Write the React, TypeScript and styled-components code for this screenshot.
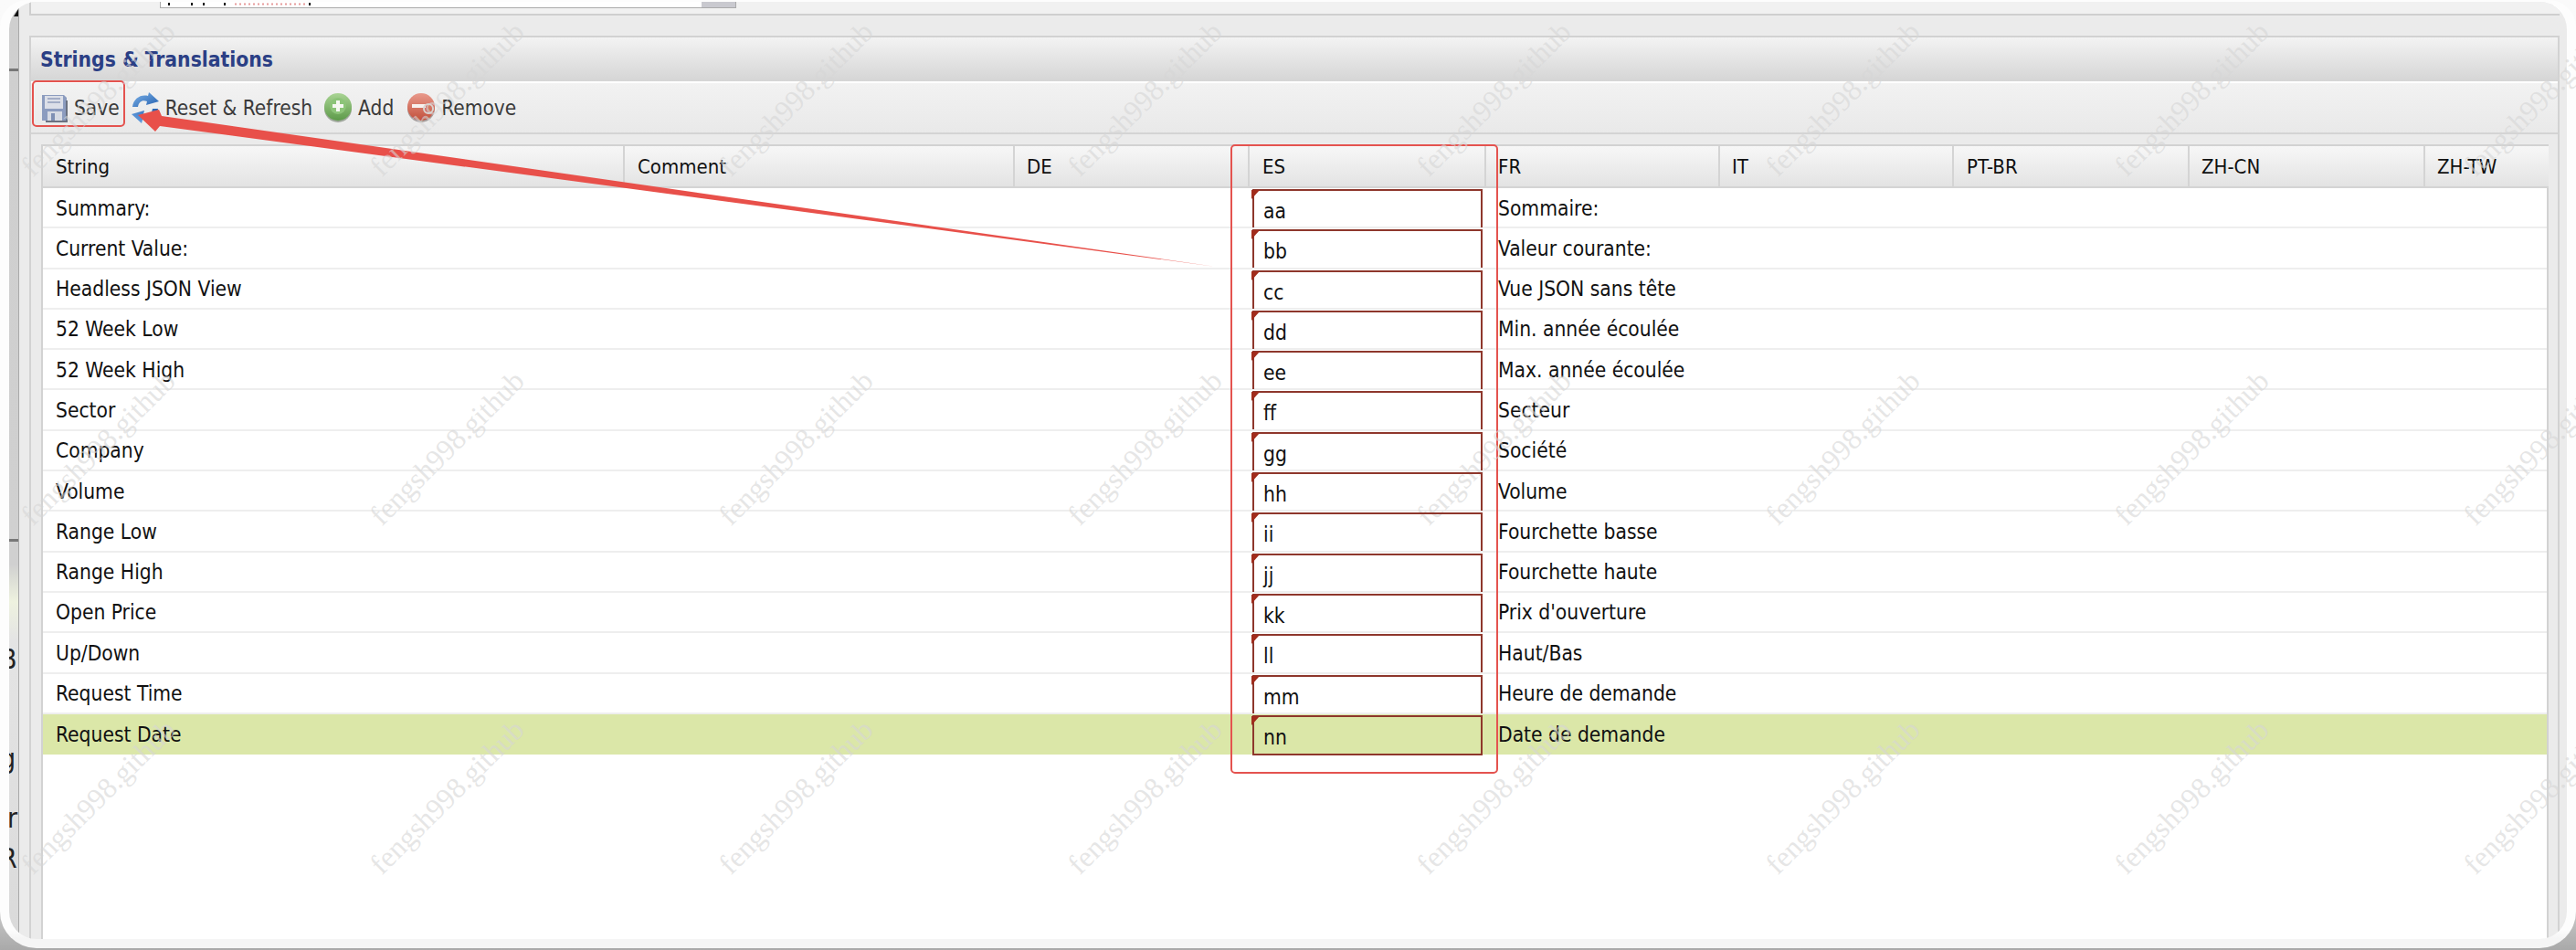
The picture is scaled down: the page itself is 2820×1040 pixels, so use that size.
import styled, { createGlobalStyle } from "styled-components";

const GlobalStyle = createGlobalStyle`
  html, body {
    margin: 0;
    padding: 0;
    background: #fff;
  }
  #root {
    width: 2820px;
    height: 1040px;
    overflow: hidden;
  }
`;

const uiFont = `"DejaVu Sans Condensed", "DejaVu Sans", "Noto Sans", sans-serif`;

const columns = [
  { name: "String", pad: 14 },
  { name: "Comment", pad: 14 },
  { name: "DE", pad: 13 },
  { name: "ES", pad: 14 },
  { name: "FR", pad: 13 },
  { name: "IT", pad: 13 },
  { name: "PT-BR", pad: 14 },
  { name: "ZH-CN", pad: 13 },
  { name: "ZH-TW", pad: 13 },
];

const rows = [
  ["Summary:", "aa", "Sommaire:"],
  ["Current Value:", "bb", "Valeur courante:"],
  ["Headless JSON View", "cc", "Vue JSON sans tête"],
  ["52 Week Low", "dd", "Min. année écoulée"],
  ["52 Week High", "ee", "Max. année écoulée"],
  ["Sector", "ff", "Secteur"],
  ["Company", "gg", "Société"],
  ["Volume", "hh", "Volume"],
  ["Range Low", "ii", "Fourchette basse"],
  ["Range High", "jj", "Fourchette haute"],
  ["Open Price", "kk", "Prix d'ouverture"],
  ["Up/Down", "ll", "Haut/Bas"],
  ["Request Time", "mm", "Heure de demande"],
  ["Request Date", "nn", "Date de demande"],
];

const stripGlyphs = [
  { text: "B", top: 112 },
  { text: "/", top: 35 },
  { text: "g", top: 6 },
  { text: "Ir", top: 31 },
  { text: "R", top: 10 },
];

const gridTemplate = "637px 427px 257px 259px 256px 256px 258px 258px 135px";

const Screen = styled.div`
  position: relative;
  width: 2820px;
  height: 1040px;
  overflow: hidden;
  background: linear-gradient(180deg, #fafafa 0%, #f5f5f5 90%, #a9a9a9 100%);
  font-family: ${uiFont};
`;

const Frame = styled.div`
  box-sizing: border-box;
  width: 2820px;
  height: 1038px;
  padding: 2px 10px 10px;
  background: linear-gradient(180deg, #fdfdfd 0%, #fdfdfd 98%, #f5f5f5 99%);
  border-radius: 30px 30px 40px 40px;
`;

const Viewport = styled.div`
  display: flex;
  height: 100%;
  overflow: hidden;
  border-radius: 30px;
`;

const LeftStrip = styled.div`
  display: flex;
  flex-direction: column;
  box-sizing: border-box;
  flex: 0 0 11px;
  padding-top: 8px;
  overflow: hidden;
  border-right: 1px solid #a9a9a9;
  background: linear-gradient(180deg, #cfcfcf 0%, #d0d0d0 60%, #eef2df 64%, #e4e4e4 68%, #dadada 100%);
  color: #222;
  font-size: 30px;
  line-height: 34px;
`;

const StripMark = styled.div`
  width: 0;
  height: 0;
  margin-left: 5px;
  border-left: 5px solid transparent;
  border-bottom: 8px solid #111;
`;

const StripRule = styled.div<{ $top: number }>`
  flex: none;
  height: 3px;
  margin-top: ${(p) => p.$top}px;
  background: #777;
`;

const StripGlyph = styled.div<{ $top: number }>`
  flex: none;
  margin: ${(p) => p.$top}px 0 0 -10px;
  white-space: nowrap;
`;

const Main = styled.div`
  display: flex;
  flex: 1;
  flex-direction: column;
  min-width: 0;
  padding: 0 8px 0 11px;
  background: #ebebeb;
`;

const TopPanel = styled.div`
  flex: none;
  box-sizing: border-box;
  height: 15px;
  padding-left: 141px;
  border-left: 2px solid #cfcfcf;
  border-bottom: 2px solid #cfcfcf;
  background: #f1f1f1;
`;

const TopField = styled.div`
  display: flex;
  box-sizing: border-box;
  width: 631px;
  height: 7px;
  border: 1px solid #aaa;
  border-top: 0;
  background: #fff;
`;

const TopFieldScroll = styled.div`
  margin-left: auto;
  width: 37px;
  background: #c9c9cf;
`;

const Section = styled.section`
  display: flex;
  flex: 1;
  flex-direction: column;
  min-height: 0;
  margin-top: 22px;
  border: solid #d2d2d2;
  border-width: 2px 2px 0;
`;

const TitleBar = styled.div`
  flex: none;
  display: flex;
  align-items: center;
  box-sizing: border-box;
  height: 50px;
  padding-left: 10px;
  border-bottom: 2px solid #fff;
  background: linear-gradient(180deg, #f3f3f3 0%, #d5d5d5 100%);
`;

const Title = styled.h2`
  margin: 0;
  color: #2b3f85;
  font-size: 22.7px;
  font-weight: 700;
`;

const Toolbar = styled.div`
  flex: none;
  display: flex;
  align-items: center;
  box-sizing: border-box;
  height: 56px;
  padding: 0 0 0 10px;
  border-bottom: 2px solid #d4d4d4;
  background: linear-gradient(180deg, #f2f2f2 0%, #e9e9e9 100%);
`;

const ToolButton = styled.div<{ $gap: number }>`
  display: flex;
  align-items: center;
  gap: 6px;
  margin-right: ${(p) => p.$gap}px;
  color: #3b3b3b;
  font-size: 22.5px;
  white-space: nowrap;
`;

const Body = styled.div`
  display: flex;
  flex: 1;
  min-height: 0;
  padding: 11px 10px 0 11px;
`;

const Table = styled.div`
  flex: 1;
  min-width: 0;
  border: solid #d2d2d2;
  border-width: 2px 2px 0;
  background: #fff;
`;

const HeaderRow = styled.div`
  display: grid;
  grid-template-columns: ${gridTemplate};
  height: 46px;
`;

const HeaderCell = styled.div<{ $pad: number }>`
  display: flex;
  align-items: center;
  box-sizing: border-box;
  padding-left: ${(p) => p.$pad}px;
  border-right: 2px solid #d4d4d4;
  border-bottom: 2px solid #d4d4d4;
  background: linear-gradient(180deg, #f7f7f7 0%, #e3e3e3 100%);
  color: #111;
  font-size: 22px;

  &:last-child {
    border-right: 0;
  }
`;

const Row = styled.div<{ $selected?: boolean }>`
  display: grid;
  grid-template-columns: ${gridTemplate};
  box-sizing: border-box;
  height: 44.3px;
  border-bottom: 2px solid ${(p) => (p.$selected ? "#dbe7a8" : "#eeeeee")};
  background: ${(p) => (p.$selected ? "#dbe7a8" : "#fff")};
`;

const Cell = styled.div<{ $pad?: number }>`
  display: flex;
  align-items: center;
  padding-left: ${(p) => p.$pad ?? 14}px;
  color: #111;
  font-size: 22.6px;
  white-space: nowrap;
`;

const EditCell = styled.div<{ $last?: boolean }>`
  position: relative;
  box-sizing: border-box;
  display: flex;
  align-items: center;
  width: 252px;
  height: ${(p) => (p.$last ? 44 : 42)}px;
  margin: 1px 0 0 3px;
  padding: 4px 0 0 10px;
  border: 2px solid #8e372c;
  border-bottom-width: ${(p) => (p.$last ? 2 : 0)}px;
  color: #111;
  font-size: 22.6px;
  z-index: 1;

  &::before {
    content: "";
    position: absolute;
    top: -1px;
    left: -3px;
    border-top: 10px solid #a12c1c;
    border-right: 9px solid transparent;
  }
`;

const Annotation = styled.div<{ $x: number; $y: number; $w: number; $h: number }>`
  position: absolute;
  left: ${(p) => p.$x}px;
  top: ${(p) => p.$y}px;
  box-sizing: border-box;
  width: ${(p) => p.$w}px;
  height: ${(p) => p.$h}px;
  border: 2px solid #e4534f;
  border-radius: 5px;
`;

const ArrowLayer = styled.svg`
  position: absolute;
  inset: 0;
`;

const WatermarkLayer = styled.div`
  position: absolute;
  left: -83px;
  top: -83px;
  display: grid;
  grid-template-columns: repeat(8, 382px);
  grid-auto-rows: 382px;
  pointer-events: none;
`;

const Watermark = styled.span`
  align-self: center;
  justify-self: center;
  transform: rotate(-45deg);
  color: rgba(214, 214, 214, 0.62);
  font-family: "Liberation Serif", serif;
  font-size: 32px;
  white-space: nowrap;
`;

function SaveIcon() {
  return (
    <svg width="31" height="32" viewBox="0 0 31 32">
      <defs>
        <filter id="saveBlur"><feGaussianBlur stdDeviation="0.7" /></filter>
      </defs>
      <g filter="url(#saveBlur)">
        <path d="M2 2h24l3 3v25H2z" fill="#8c9cbf" />
        <path d="M5 3h20v14H5z" fill="#dcdfe8" />
        <path d="M8 6h14M8 10h14" stroke="#a3adc6" strokeWidth="2" />
        <path d="M8 20h16v10H8z" fill="#d7dbe4" />
        <path d="M12 22h4v8h-4z" fill="#7f90b4" />
        <path d="M29 8v23H6" fill="none" stroke="#6a7180" strokeWidth="2" />
      </g>
    </svg>
  );
}

function RefreshIcon() {
  return (
    <svg width="32" height="34" viewBox="0 0 32 34">
      <defs>
        <linearGradient id="refreshTop" x1="0" y1="0" x2="1" y2="1">
          <stop offset="0" stopColor="#7fb4e8" />
          <stop offset="1" stopColor="#2460b0" />
        </linearGradient>
        <linearGradient id="refreshLow" x1="1" y1="0" x2="0" y2="1">
          <stop offset="0" stopColor="#2460b0" />
          <stop offset="1" stopColor="#6fa9e6" />
        </linearGradient>
        <filter id="refreshBlur"><feGaussianBlur stdDeviation="0.5" /></filter>
      </defs>
      <g filter="url(#refreshBlur)">
        <path d="M2 16C3 7 11 2 19 4l1-4 11 10-14 4 1-4C13 8 9 10 8 16z" fill="url(#refreshTop)" />
        <path d="M30 18c-1 9-9 14-17 12l-1 4L1 24l14-4-1 4c5 2 9 0 10-6z" fill="url(#refreshLow)" />
      </g>
    </svg>
  );
}

function AddIcon() {
  return (
    <svg width="32" height="34" viewBox="0 0 32 34">
      <defs>
        <linearGradient id="addFill" x1="0" y1="0" x2="0" y2="1">
          <stop offset="0" stopColor="#a9d494" />
          <stop offset="1" stopColor="#5d9a49" />
        </linearGradient>
        <filter id="addBlur"><feGaussianBlur stdDeviation="0.7" /></filter>
      </defs>
      <g filter="url(#addBlur)">
        <circle cx="16" cy="18" r="15" fill="#6d7a66" opacity="0.6" />
        <circle cx="16" cy="16" r="15" fill="url(#addFill)" />
        <circle cx="16" cy="15" r="9" fill="#8cc478" />
        <path d="M16 9v12M10 15h12" stroke="#f6f8f2" strokeWidth="4" />
      </g>
    </svg>
  );
}

function RemoveIcon() {
  return (
    <svg width="32" height="34" viewBox="0 0 32 34">
      <defs>
        <linearGradient id="removeFill" x1="0" y1="0" x2="0" y2="1">
          <stop offset="0" stopColor="#e99a8c" />
          <stop offset="1" stopColor="#c2503c" />
        </linearGradient>
        <filter id="removeBlur"><feGaussianBlur stdDeviation="0.7" /></filter>
      </defs>
      <g filter="url(#removeBlur)">
        <circle cx="16" cy="18" r="15" fill="#7a6a66" opacity="0.6" />
        <circle cx="16" cy="16" r="15" fill="url(#removeFill)" />
        <path d="M6 15h15" stroke="#f8f1ee" strokeWidth="4" />
        <circle cx="24" cy="18" r="5" fill="none" stroke="#d9d4d0" strokeWidth="2" />
      </g>
    </svg>
  );
}

export default function App() {
  return (
    <Screen>
      <GlobalStyle />
      <Frame>
        <Viewport>
          <LeftStrip>
            <StripMark />
            <StripRule $top={57} />
            <StripRule $top={512} />
            {stripGlyphs.map((glyph) => (
              <StripGlyph key={glyph.text} $top={glyph.top}>{glyph.text}</StripGlyph>
            ))}
          </LeftStrip>
          <Main>
            <TopPanel>
              <TopField>
                <svg width="170" height="6" viewBox="0 0 170 6">
                  <path d="M8 1h2v3H8zM33 1h2v3h-2zM46 1h2v3h-2zM69 1h2v3h-2zM162 1h2v3h-2z" fill="#111" />
                  <path d="M81 2.5h80" stroke="#e59a9a" strokeWidth="2" strokeDasharray="2 3" />
                </svg>
                <TopFieldScroll />
              </TopField>
            </TopPanel>
            <Section>
              <TitleBar>
                <Title>Strings &amp; Translations</Title>
              </TitleBar>
              <Toolbar>
                <ToolButton $gap={12}><SaveIcon />Save</ToolButton>
                <ToolButton $gap={12}><RefreshIcon />Reset &amp; Refresh</ToolButton>
                <ToolButton $gap={14}><AddIcon />Add</ToolButton>
                <ToolButton $gap={0}><RemoveIcon />Remove</ToolButton>
              </Toolbar>
              <Body>
                <Table>
                  <HeaderRow>
                    {columns.map((column) => (
                      <HeaderCell key={column.name} $pad={column.pad}>{column.name}</HeaderCell>
                    ))}
                  </HeaderRow>
                  {rows.map(([text, es, fr], index) => {
                    const last = index === rows.length - 1;
                    return (
                      <Row key={text} $selected={last}>
                        <Cell>{text}</Cell>
                        <Cell />
                        <Cell />
                        <EditCell $last={last}>{es}</EditCell>
                        <Cell $pad={13}>{fr}</Cell>
                        <Cell />
                        <Cell />
                        <Cell />
                        <Cell />
                      </Row>
                    );
                  })}
                </Table>
              </Body>
            </Section>
          </Main>
        </Viewport>
      </Frame>

      <Annotation $x={35} $y={88} $w={102} $h={51} />
      <Annotation $x={1347} $y={158} $w={293} $h={689} />
      <ArrowLayer width="2820" height="1040" viewBox="0 0 2820 1040">
        <polygon points="151,126 174,120 177,127 1331,292 175,138 170,144" fill="#e8504a" />
      </ArrowLayer>

      <WatermarkLayer>
        {Array.from({ length: 24 }, (_, index) => (
          <Watermark key={index}>fengsh998.github</Watermark>
        ))}
      </WatermarkLayer>
    </Screen>
  );
}
